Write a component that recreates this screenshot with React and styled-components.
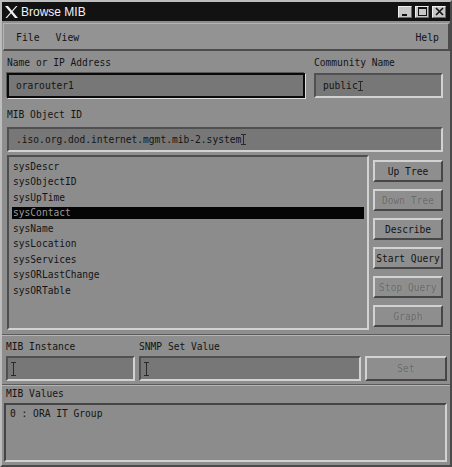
import React from "react";
import styled, { createGlobalStyle, css } from "styled-components";

const Global = createGlobalStyle`
  html, body { margin: 0; padding: 0; background: #8e8e8e; }
  body { width: 452px; height: 467px; overflow: hidden; }
  * { box-sizing: border-box; }
`;

const LIGHT = "#d2d2d2";
const DARK = "#464646";
const BG = "#8e8e8e";
const FIELD = "#777777";

const Window = styled.div`
  width: 452px;
  height: 467px;
  background: ${BG};
  border-top: 2px solid #bdbdbd;
  border-left: 2px solid #bdbdbd;
  border-right: 2px solid #4a4a4a;
  border-bottom: 2px solid #4a4a4a;
  display: flex;
  flex-direction: column;
  font-family: "DejaVu Sans Mono", "Liberation Mono", monospace;
  font-size: 9.6px;
  color: #141414;
`;

const TitleBar = styled.div`
  height: 19px;
  background: #121212;
  display: flex;
  align-items: center;
  padding: 0 4px 0 3px;
  color: #f2f2f2;
  font-family: "Liberation Sans", Arial, sans-serif;
  font-size: 12px;
`;

const TitleText = styled.span`
  margin-left: 3px;
  flex: 1;
`;

const TitleButtons = styled.div`
  display: flex;
  gap: 3px;
`;

const TitleButton = styled.div`
  width: 14px;
  height: 12px;
  background: #c6c6c6;
  border-top: 1px solid #eeeeee;
  border-left: 1px solid #eeeeee;
  border-right: 1px solid #6a6a6a;
  border-bottom: 1px solid #6a6a6a;
  display: flex;
  align-items: center;
  justify-content: center;
`;

const MenuBar = styled.div`
  margin: 2px 0 0 1px;
  height: 28px;
  border-top: 1px solid #b4b4b4;
  border-left: 1px solid #b4b4b4;
  border-right: 2px solid #4c4c4c;
  border-bottom: 2px solid #4c4c4c;
  background: #939393;
  display: flex;
  align-items: center;
  padding: 1px 9px 0 12px;
  font-size: 9.8px;
`;

const MenuItem = styled.span`
  margin-right: ${(p) => (p.$gap ? p.$gap : 0)}px;
  margin-left: ${(p) => (p.$push ? "auto" : "0")};
`;

const TopForm = styled.div`
  padding: 5px 7px 0 5px;
  display: flex;
  flex-direction: column;
`;

const FieldGrid = styled.div`
  display: grid;
  grid-template-columns: ${(p) => p.$cols};
  column-gap: ${(p) => p.$gap}px;
`;

const Label = styled.div`
  height: 14px;
  line-height: 14px;
  white-space: nowrap;
  margin-top: ${(p) => p.$mt || 0}px;
  margin-bottom: ${(p) => p.$mb || 0}px;
`;

const Field = styled.div`
  height: 25px;
  background: ${FIELD};
  display: flex;
  align-items: center;
  padding-left: ${(p) => p.$pl || 7}px;
  white-space: nowrap;
  overflow: hidden;
  border: 2px solid;
  ${(p) =>
    p.$focused
      ? css`
          border-color: #0a0a0a;
          box-shadow: -1px -1px 0 #5a5a5a, 1px 1px 0 #dcdcdc;
        `
      : css`
          border-color: #505050 ${LIGHT} ${LIGHT} #505050;
        `}
`;

const ListRow = styled.div`
  margin-top: 3px;
  height: 175px;
  display: grid;
  grid-template-columns: 362px 70px;
  column-gap: 4px;
`;

const List = styled.div`
  border: 2px solid;
  border-color: #4e4e4e ${LIGHT} ${LIGHT} #4e4e4e;
  background: #8c8c8c;
  padding: 2px 3px 0 3px;
`;

const ListItem = styled.div`
  height: 15.5px;
  display: flex;
  align-items: center;
`;

const ItemText = styled.div`
  flex: 1;
  height: 12px;
  line-height: 12px;
  padding-left: 1px;
  background: ${(p) => (p.$selected ? "#050505" : "transparent")};
  color: ${(p) => (p.$selected ? "#9a9a9a" : "#141414")};
`;

const ButtonColumn = styled.div`
  padding-top: 5px;
  display: flex;
  flex-direction: column;
  gap: 7px;
`;

const Button = styled.div`
  height: ${(p) => p.$h || 22}px;
  border: 2px solid;
  border-color: ${LIGHT} ${DARK} ${DARK} ${LIGHT};
  background: ${BG};
  display: flex;
  align-items: center;
  justify-content: center;
  white-space: nowrap;
  color: ${(p) => (p.$disabled ? "#6c6c6c" : "#141414")};
  ${(p) =>
    p.$disabled &&
    css`
      text-shadow: 1px 0 0 rgba(170, 170, 170, 0.35);
    `}
`;

const Separator = styled.div`
  height: 2px;
  margin-top: ${(p) => p.$mt}px;
  border-top: 1px solid #5c5c5c;
  border-bottom: 1px solid #b4b4b4;
`;

const BottomForm = styled.div`
  padding: 0 3px 0 4px;
  display: flex;
  flex-direction: column;
`;

const Values = styled.div`
  flex: 1;
  margin: 0 3px 3px 2px;
  border: 2px solid;
  border-color: #444 ${LIGHT} ${LIGHT} #444;
  background: #8c8c8c;
  padding: 3px 4px;
  line-height: 12px;
`;

const XLogo = () => (
  <svg width="13" height="12" viewBox="0 0 13 12">
    <polygon points="0,0 3,0 13,12 10,12" fill="#f2f2f2" />
    <polygon points="11,0 12.5,0 2,12 0.5,12" fill="#f2f2f2" />
  </svg>
);

const IBeam = ({ h = 12 }) => (
  <svg width="5" height={h} viewBox={`0 0 5 ${h}`} style={{ flex: "none" }}>
    <path
      d={`M0 0.5H5M2.5 0.5V${h - 0.5}M0 ${h - 0.5}H5`}
      stroke="#2a2a2a"
      strokeWidth="1"
      fill="none"
    />
  </svg>
);

const items = [
  "sysDescr",
  "sysObjectID",
  "sysUpTime",
  "sysContact",
  "sysName",
  "sysLocation",
  "sysServices",
  "sysORLastChange",
  "sysORTable",
];

const buttons = [
  { label: "Up Tree" },
  { label: "Down Tree", disabled: true },
  { label: "Describe" },
  { label: "Start Query" },
  { label: "Stop Query", disabled: true },
  { label: "Graph", disabled: true },
];

export default function App() {
  return (
    <>
      <Global />
      <Window>
        <TitleBar>
          <XLogo />
          <TitleText>Browse MIB</TitleText>
          <TitleButtons>
            <TitleButton>
              <svg width="8" height="8" viewBox="0 0 8 8">
                <rect x="1" y="6" width="5" height="2" fill="#111" />
              </svg>
            </TitleButton>
            <TitleButton>
              <svg width="9" height="9" viewBox="0 0 9 9">
                <rect x="0.5" y="0.5" width="8" height="8" fill="none" stroke="#111" />
                <rect x="0.5" y="0.5" width="8" height="1.5" fill="#111" />
              </svg>
            </TitleButton>
            <TitleButton>
              <svg width="9" height="9" viewBox="0 0 9 9">
                <path d="M1 1L8 8M8 1L1 8" stroke="#111" strokeWidth="1.6" />
              </svg>
            </TitleButton>
          </TitleButtons>
        </TitleBar>

        <MenuBar>
          <MenuItem $gap={16}>File</MenuItem>
          <MenuItem>View</MenuItem>
          <MenuItem $push>Help</MenuItem>
        </MenuBar>

        <TopForm>
          <FieldGrid $cols="298px 1fr" $gap={9}>
            <Label $mb={3}>Name or IP Address</Label>
            <Label $mb={3}>Community Name</Label>
            <Field $focused>orarouter1</Field>
            <Field>
              public
              <IBeam h={10} />
            </Field>
          </FieldGrid>

          <Label $mt={10} $mb={5}>MIB Object ID</Label>
          <Field>
            .iso.org.dod.internet.mgmt.mib-2.system
            <IBeam h={11} />
          </Field>

          <ListRow>
            <List>
              {items.map((it) => (
                <ListItem key={it}>
                  <ItemText $selected={it === "sysContact"}>{it}</ItemText>
                </ListItem>
              ))}
            </List>
            <ButtonColumn>
              {buttons.map((b) => (
                <Button key={b.label} $disabled={b.disabled}>
                  {b.label}
                </Button>
              ))}
            </ButtonColumn>
          </ListRow>
        </TopForm>

        <Separator $mt={4} />

        <BottomForm>
          <FieldGrid $cols="129px 222px 1fr" $gap={4}>
            <Label $mt={4} $mb={2}>MIB Instance</Label>
            <Label $mt={4} $mb={2}>SNMP Set Value</Label>
            <span />
            <Field $pl={3}>
              <IBeam h={14} />
            </Field>
            <Field $pl={3}>
              <IBeam h={14} />
            </Field>
            <Button $disabled $h={25}>Set</Button>
          </FieldGrid>
        </BottomForm>

        <Separator $mt={3} />

        <BottomForm>
          <Label $mt={1} $mb={2}>MIB Values</Label>
        </BottomForm>
        <Values>0 : ORA IT Group</Values>
      </Window>
    </>
  );
}
